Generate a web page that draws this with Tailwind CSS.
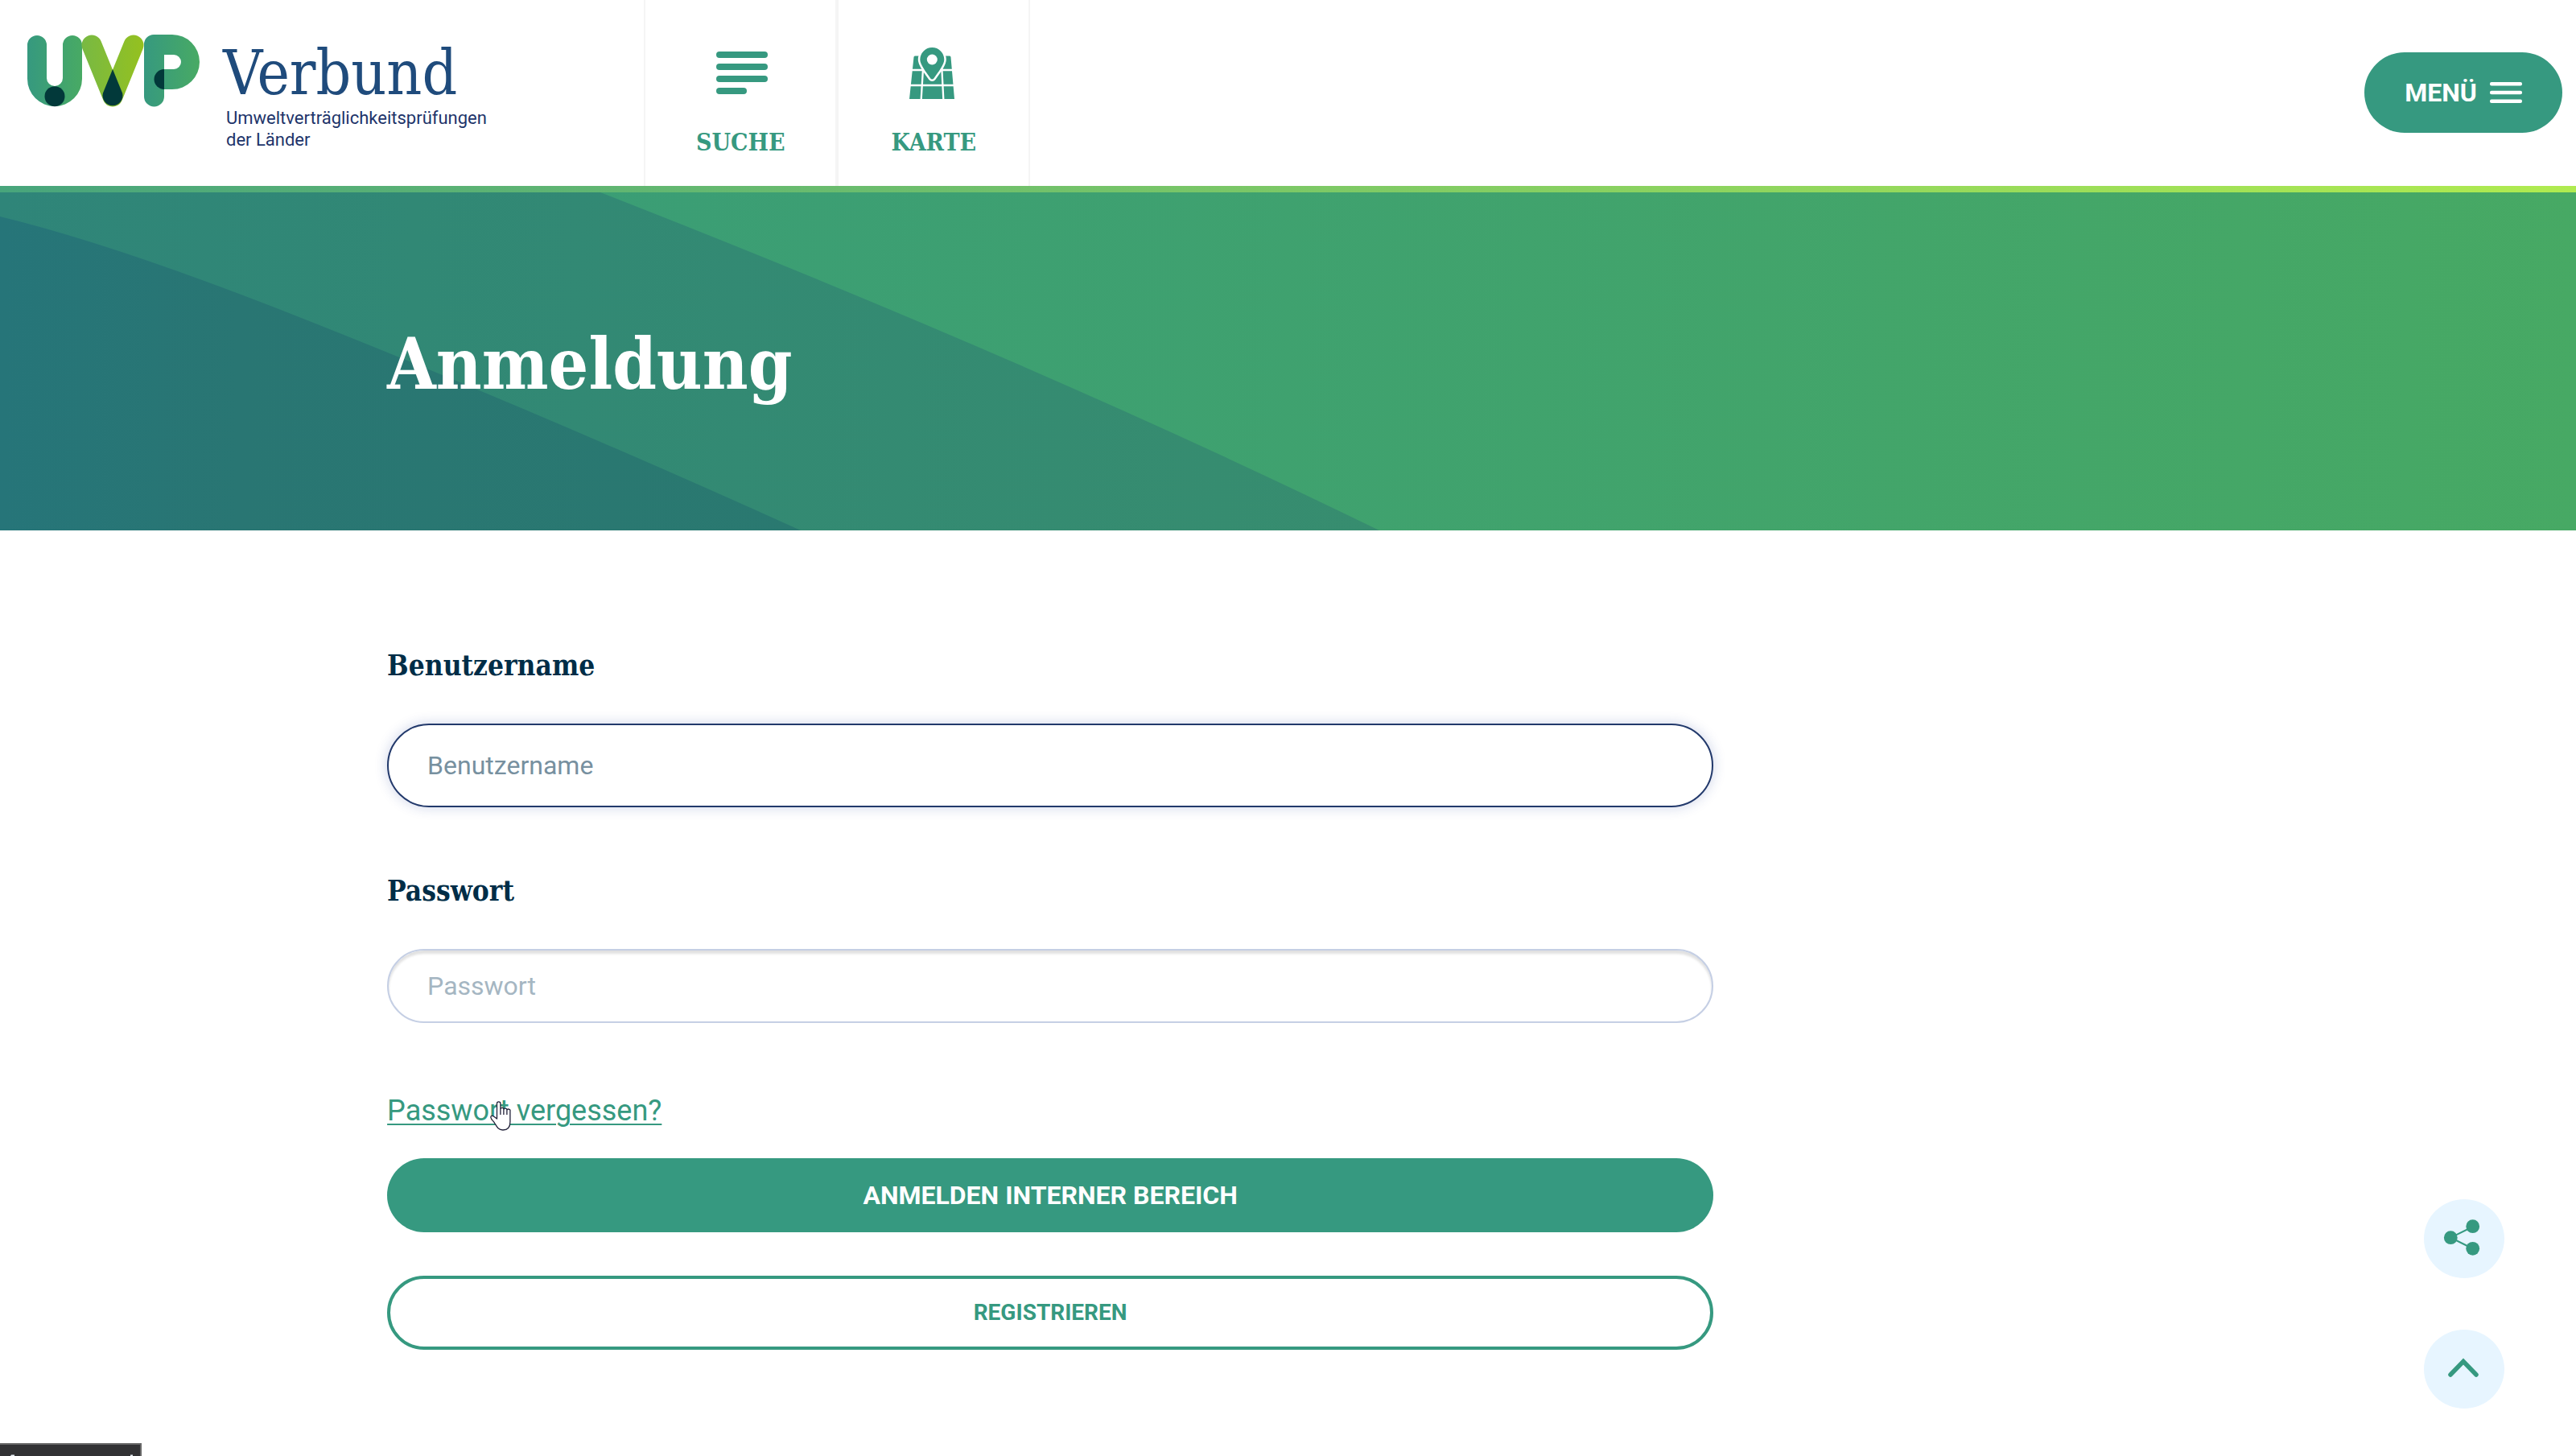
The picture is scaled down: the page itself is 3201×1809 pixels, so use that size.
<!DOCTYPE html>
<html lang="de">
<head>
<meta charset="utf-8">
<meta name="viewport" content="width=device-width, initial-scale=1">
<title>Anmeldung – UVP Verbund</title>
<script src="https://cdn.jsdelivr.net/npm/@tailwindcss/browser@4"></script>
</head>
<body class="min-h-screen overflow-x-hidden bg-white font-['Roboto',sans-serif] text-[#002d47]">

<header>
  <div class="flex h-[231px] items-stretch">
    <a href="#" class="flex w-1/4 shrink-0 items-start gap-[29px] pl-[34px]">
      <svg class="mt-[43px] h-[90px] w-[214px] shrink-0" viewBox="34 43 214 90" aria-hidden="true">
        <defs>
          <linearGradient id="gu" gradientUnits="userSpaceOnUse" x1="34" y1="0" x2="102" y2="0"><stop offset="0" stop-color="#36997f"/><stop offset="1" stop-color="#48aa64"/></linearGradient>
          <linearGradient id="gv" gradientUnits="userSpaceOnUse" x1="102" y1="0" x2="179" y2="0"><stop offset="0" stop-color="#78b943"/><stop offset="1" stop-color="#95c11f"/></linearGradient>
          <linearGradient id="gp" gradientUnits="userSpaceOnUse" x1="179" y1="0" x2="248" y2="0"><stop offset="0" stop-color="#36997f"/><stop offset="1" stop-color="#48aa64"/></linearGradient>
        </defs>
        <path fill="url(#gu)" d="M34 56a12 12 0 0 1 24 0V97a10 10 0 0 0 20 0V56a12 12 0 0 1 24 0V98a34 34 0 0 1-68 0Z"/>
        <circle cx="68" cy="119.700" r="12.500" fill="#02393a"/>
        <path d="M114 56 140 120 166 56" fill="none" stroke="url(#gv)" stroke-width="25" stroke-linecap="round" stroke-linejoin="round"/>
        <path fill="#02393a" d="M140 86 152.200 116A12.500 12.500 0 1 1 127.800 116Z"/>
        <path fill="url(#gp)" d="M191 43H214a34 34 0 0 1 0 68H204V120a12.500 12.500 0 0 1-25 0V55a12 12 0 0 1 12-12ZM204 68V86H216a9 9 0 0 0 0-18Z"/>
        <path fill="#02393a" d="M204 86V111a12.500 12.500 0 0 1 0-25Z"/>
      </svg>
      <span class="flex flex-col gap-[6px] pt-[55px]">
        <span class="font-['DejaVu_Serif_Condensed','DejaVu_Serif',serif] text-[76px] leading-[72px] text-[#1f4b7c]">Verbund</span>
        <span class="pl-1 text-[22px] leading-[27px] text-[#21346a]">Umweltverträglichkeitsprüfungen<br>der Länder</span>
      </span>
    </a>
    <nav class="flex font-['DejaVu_Serif_Condensed','DejaVu_Serif',serif] text-[30px] leading-9 font-bold text-[#369980]">
      <a href="#" class="flex w-60 flex-col items-center gap-9 border-x-2 border-[#f5f5f5] pt-[59px]">
        <svg class="size-16 overflow-visible" viewBox="0 0 64 64" fill="currentColor" aria-hidden="true">
          <rect x="2" y="5" width="64" height="8" rx="4"/><rect x="2" y="20" width="64" height="8" rx="4"/><rect x="2" y="35" width="64" height="8" rx="4"/><rect x="2" y="50" width="38" height="8" rx="4"/>
        </svg>
        SUCHE
      </a>
      <a href="#" class="flex w-60 flex-col items-center gap-9 border-x-2 border-[#f5f5f5] pt-[59px]">
        <svg class="size-16" viewBox="0 0 64 64" aria-hidden="true">
          <path fill="currentColor" d="M9 10.500H52a1.500 1.500 0 0 1 1.500 1.500L58 64H2L7.500 12a1.500 1.500 0 0 1 1.500-1.500Z"/>
          <path fill="none" stroke="#fff" stroke-width="2.300" d="M0 28H64M0 47H64M16.700 64 20 10M44.300 64 41.500 10"/>
          <path fill="#fff" d="M14 9H47V16H14Z"/>
          <path fill="currentColor" stroke="#fff" stroke-width="5" paint-order="stroke" stroke-linejoin="round" d="M30.300 0a15 15 0 0 1 15 15c0 6-7 15-13 23.500a2.500 2.500 0 0 1-4 0C22.300 30 15.300 21 15.300 15a15 15 0 0 1 15-15Z"/>
          <circle cx="30.300" cy="15" r="6.500" fill="#fff"/>
        </svg>
        KARTE
      </a>
    </nav>
    <button type="button" class="mt-[65px] mr-[17px] ml-auto flex h-[100px] w-[246px] items-center justify-center gap-4 rounded-full bg-[#369980] text-[32px] leading-[38px] font-bold text-white">
      MENÜ
      <svg class="h-[26px] w-10" viewBox="0 0 40 26" fill="currentColor" aria-hidden="true"><rect width="40" height="4.500" rx="2"/><rect y="10.700" width="40" height="4.500" rx="2"/><rect y="21.500" width="40" height="4.500" rx="2"/></svg>
    </button>
  </div>
  <div class="h-2 bg-linear-to-r/srgb from-[#48a57c] to-[#b0eb50]"></div>
</header>

<section class="relative flex h-[420px] items-center bg-linear-to-r/srgb from-[#379a7a] to-[#47a964] px-[15.03%] pt-2">
  <svg class="absolute inset-0 h-full w-full" viewBox="0 239 3201 420" preserveAspectRatio="none" aria-hidden="true">
    <defs>
      <linearGradient id="h1" gradientUnits="userSpaceOnUse" x1="0" y1="0" x2="1714" y2="0"><stop offset="0" stop-color="#2f8579"/><stop offset=".3" stop-color="#318875"/><stop offset="1" stop-color="#378d6f"/></linearGradient>
      <linearGradient id="h2" gradientUnits="userSpaceOnUse" x1="0" y1="0" x2="995" y2="0"><stop offset="0" stop-color="#267579"/><stop offset=".3" stop-color="#297673"/><stop offset="1" stop-color="#2a7970"/></linearGradient>
    </defs>
    <path fill="url(#h1)" d="M0 239H746Q1284 449 1714 659H0Z"/>
    <path fill="url(#h2)" d="M0 269Q136 302 344 383 650 503 995 659H0Z"/>
  </svg>
  <h1 class="relative font-['DejaVu_Serif_Condensed','DejaVu_Serif',serif] text-[87px] leading-[104px] font-bold text-white">Anmeldung</h1>
</section>

<main class="px-[15.03%] pt-[144px] pb-[132px]">
  <form class="flex max-w-[1648px] flex-col">
    <label for="user" class="font-['DejaVu_Serif_Condensed','DejaVu_Serif',serif] text-[35px] leading-[48px] font-bold">Benutzername</label>
    <input id="user" type="text" placeholder="Benutzername" class="mt-12 h-[104px] w-full rounded-full border-2 border-[#22396b] bg-white px-12 text-[32px] shadow-[0_0_16px_rgba(34,57,150,0.22)] outline-none placeholder:text-[#77909f]">
    <label for="pass" class="mt-20 font-['DejaVu_Serif_Condensed','DejaVu_Serif',serif] text-[35px] leading-[48px] font-bold">Passwort</label>
    <input id="pass" type="password" placeholder="Passwort" class="mt-12 h-[92px] w-full rounded-full border-2 border-[#c5cfe4] bg-white px-12 text-[32px] shadow-[inset_0_4px_3px_rgba(0,0,0,0.12)] outline-none placeholder:text-[#a5b6c2]">
    <a href="#" class="relative mt-[85px] self-start text-[36px] leading-[48px] text-[#369980] underline decoration-2 underline-offset-4">Passwort vergessen?
      <svg class="absolute top-3 left-32 h-[37px] w-[26px]" viewBox="0 0 26 37" aria-hidden="true"><path fill="#fff" stroke="#22223a" stroke-width="1.300" stroke-linejoin="round" d="M8.500 22V3a2.200 2.200 0 0 1 4.400 0V10a2 2 0 0 1 4 .8 2 2 0 0 1 4 .8 2 2 0 0 1 4 1V26c0 6-3 10-9 10-6 0-8-5-10.500-9C3.500 24.500 1 22 .8 20c0-2 2.200-2.200 4-.8ZM12.900 10v7M16.900 11v6M20.900 12v5"/></svg>
    </a>
    <button type="submit" class="mt-[35px] h-[92px] rounded-full bg-[#369980] text-[32px] leading-10 font-bold text-white">ANMELDEN INTERNER BEREICH</button>
    <button type="button" class="mt-[54px] h-[92px] rounded-full border-4 border-[#369980] text-[28px] leading-10 font-bold text-[#369980]">REGISTRIEREN</button>
  </form>
</main>

<div class="fixed right-[89px] bottom-[59px] flex flex-col gap-16 text-[#369980]">
  <button type="button" aria-label="Teilen" class="h-[98px] w-[100px] rounded-[50%] bg-[#e7f5ff]">
    <svg class="h-[98px] w-[100px]" viewBox="0 0 100 98" fill="currentColor" aria-hidden="true"><path d="M61 34 33.300 47.700 61 61.500" fill="none" stroke="currentColor" stroke-width="2"/><circle cx="33.300" cy="47.700" r="8.400"/><circle cx="60.700" cy="33.700" r="8.400"/><circle cx="60.700" cy="61.300" r="8.400"/></svg>
  </button>
  <button type="button" aria-label="Nach oben" class="h-[98px] w-[100px] rounded-[50%] bg-[#e7f5ff]">
    <svg class="h-[98px] w-[100px]" viewBox="0 0 100 98" aria-hidden="true"><path d="M33 56 49 39.500 65 56" fill="none" stroke="currentColor" stroke-width="5.500" stroke-linecap="round"/></svg>
  </button>
</div>

<div class="fixed bottom-0 left-0 h-4 w-44 border-t-2 border-r-2 border-[#686868] bg-[#323234]">
  <svg class="h-[14px] w-[174px]" viewBox="0 0 174 14" fill="#e8eef5" aria-hidden="true"><path d="M13 14 14 12.500H18V14ZM162 12.500H165V14H162Z"/></svg>
</div>
</body>
</html>
